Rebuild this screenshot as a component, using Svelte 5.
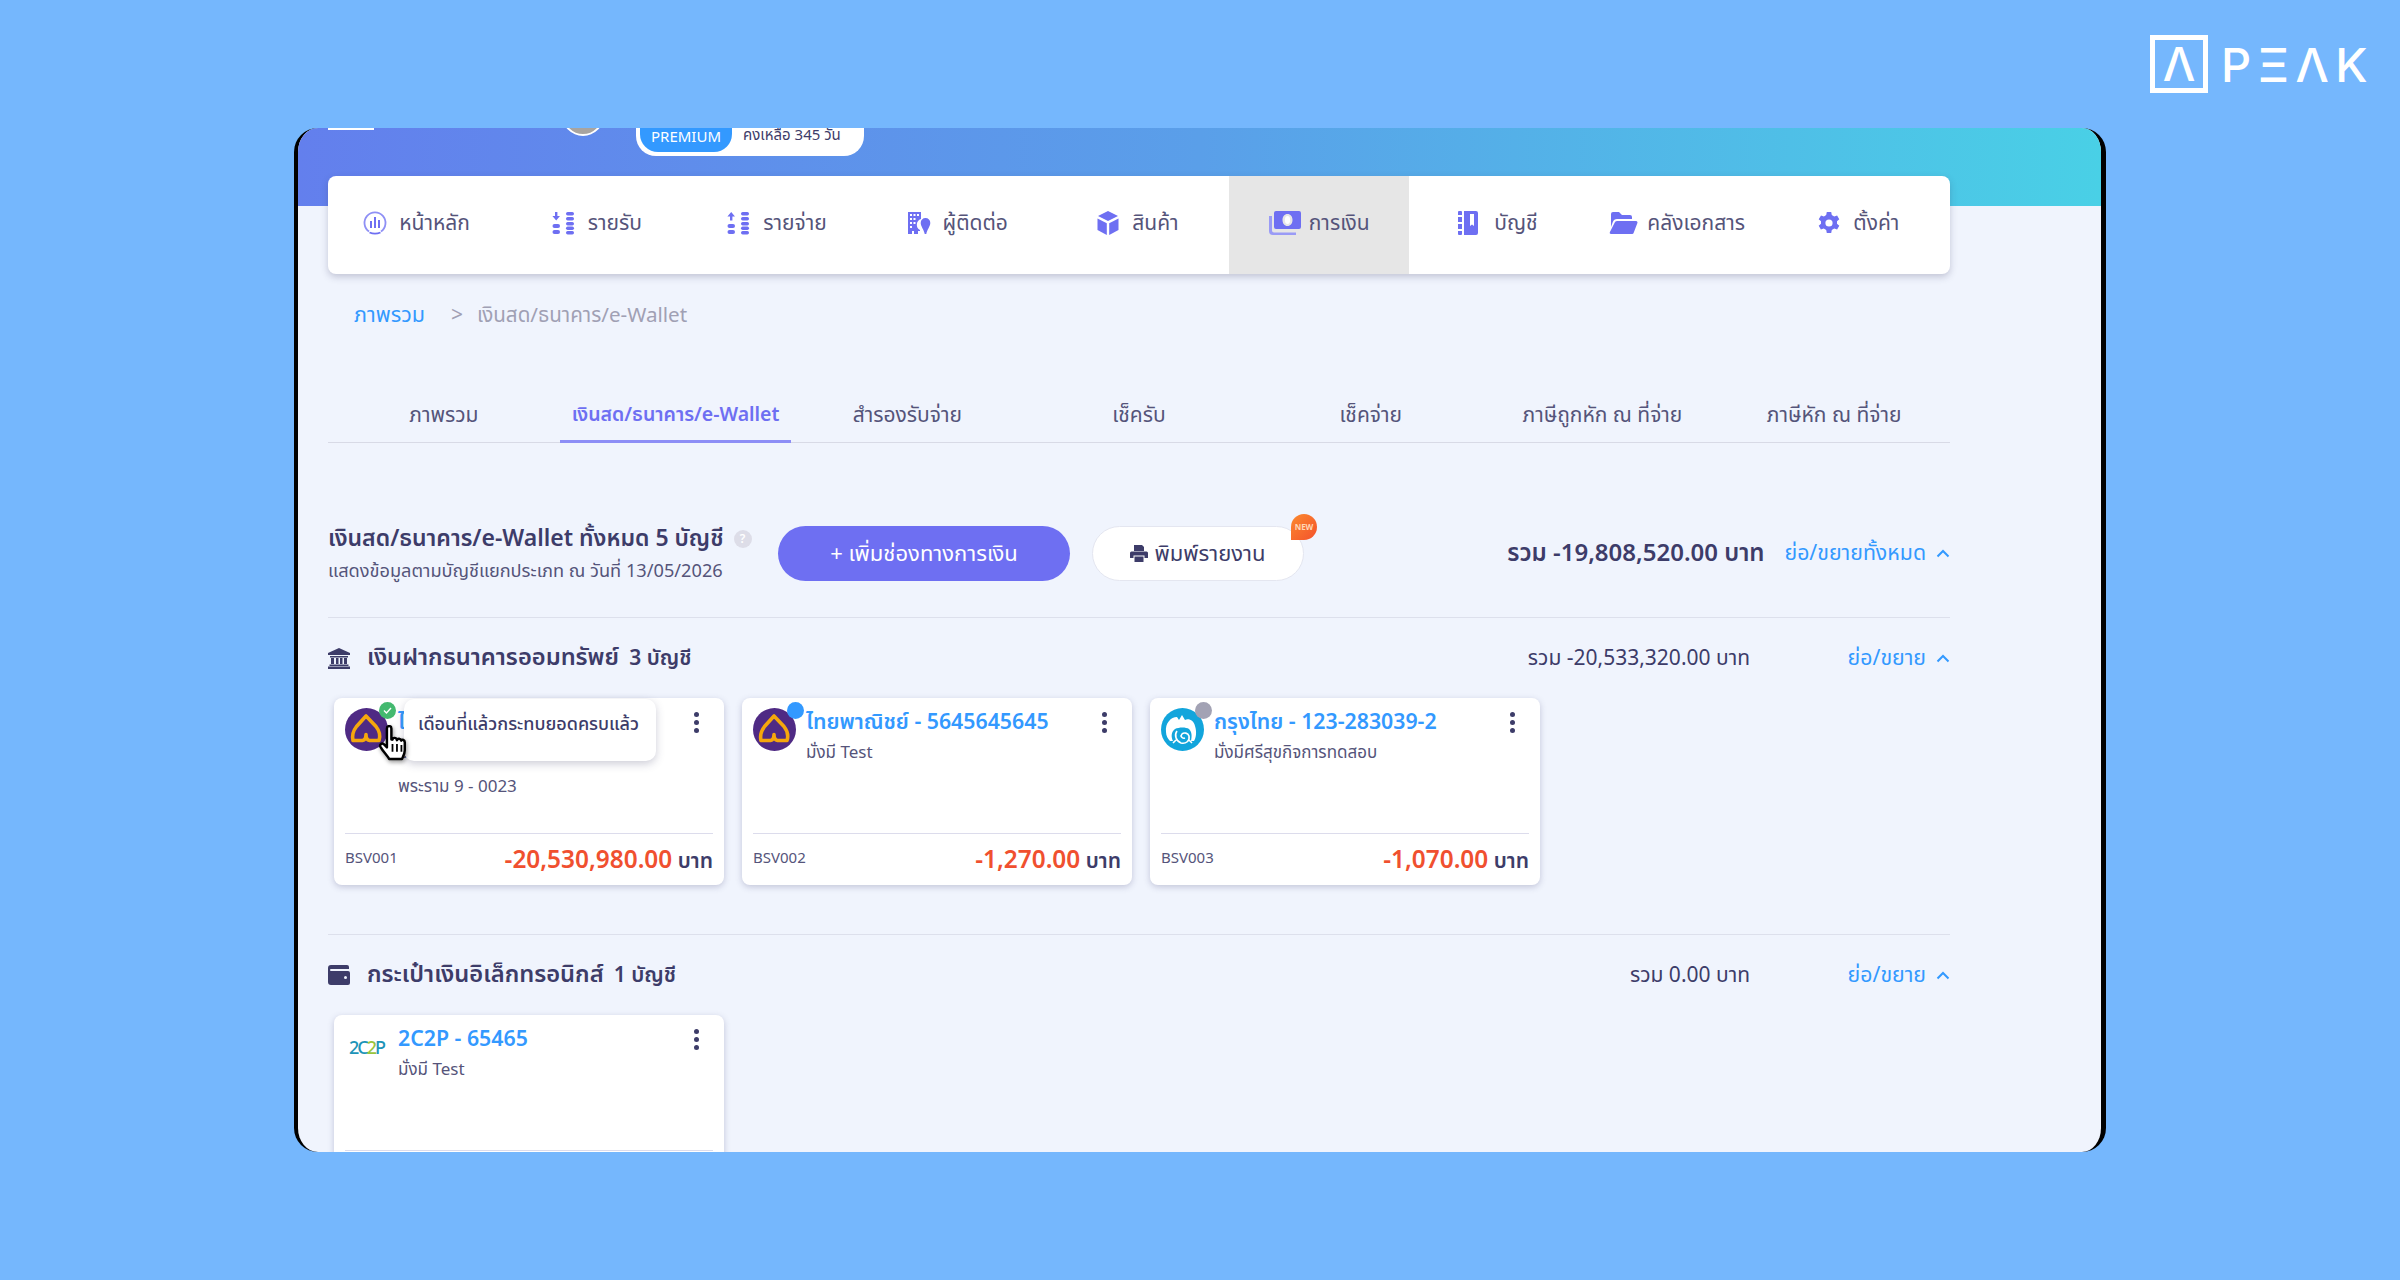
<script>
  const navItems = [
    { label: 'หน้าหลัก', icon: 'home' },
    { label: 'รายรับ', icon: 'in' },
    { label: 'รายจ่าย', icon: 'out' },
    { label: 'ผู้ติดต่อ', icon: 'contact' },
    { label: 'สินค้า', icon: 'box' },
    { label: 'การเงิน', icon: 'money', active: true },
    { label: 'บัญชี', icon: 'book' },
    { label: 'คลังเอกสาร', icon: 'folder' },
    { label: 'ตั้งค่า', icon: 'gear' }
  ];

  const tabs = ['ภาพรวม', 'เงินสด/ธนาคาร/e-Wallet', 'สำรองรับจ่าย', 'เช็ครับ', 'เช็คจ่าย', 'ภาษีถูกหัก ณ ที่จ่าย', 'ภาษีหัก ณ ที่จ่าย'];

  const bankCards = [
    { title: 'ไทยพาณิชย์ - 1234567890', sub: 'มั่งมี Test', branch: 'พระราม 9 - 0023', code: 'BSV001', amount: '-20,530,980.00', logo: 'scb', status: 'ok' },
    { title: 'ไทยพาณิชย์ - 5645645645', sub: 'มั่งมี Test', code: 'BSV002', amount: '-1,270.00', logo: 'scb', status: 'blue' },
    { title: 'กรุงไทย - 123-283039-2', sub: 'มั่งมีศรีสุขกิจการทดสอบ', code: 'BSV003', amount: '-1,070.00', logo: 'ktb', status: 'grey' }
  ];

  const walletCards = [
    { title: '2C2P - 65465', sub: 'มั่งมี Test', code: 'EWL001', amount: '0.00', logo: '2c2p' }
  ];
</script>

{#snippet chevron()}
  <svg class="chev" viewBox="0 0 14 9" width="14" height="9"><path d="M1.5 7.5 7 2l5.5 5.5" fill="none" stroke="#3399ff" stroke-width="2"/></svg>
{/snippet}

{#snippet navIcon(name)}
  <svg class="nav-icon" viewBox="0 0 32 24" width="32" height="24" fill="#6e6ff2">
    {#if name === 'home'}
      <path d="M10 20.5a10.5 10.5 0 1 1 12 0" fill="none" stroke="#8f90f5" stroke-width="1.8"/>
      <path d="M10.5 21.5q5.500 2.200 11 0" fill="none" stroke="#6e6ff2" stroke-width="1.800"/>
      <rect x="11" y="10" width="2" height="7"/><rect x="15" y="6" width="2" height="11"/><rect x="19" y="9" width="2" height="8"/>
    {:else if name === 'in' || name === 'out'}
      {#if name === 'in'}
        <path d="M7 1h2.400v4h2.600L8.200 9.500 4.400 5H7z"/>
      {:else}
        <path d="M7 9.500h2.400v-4h2.600L8.200 1 4.400 5.500H7z"/>
      {/if}
      <rect x="4.500" y="13" width="7.500" height="4" rx="2"/><rect x="4.500" y="19" width="7.500" height="4" rx="2"/>
      <rect x="18" y="1" width="8" height="3.500" rx="1.700"/><rect x="18" y="6" width="8" height="3.500" rx="1.700"/><rect x="18" y="11" width="8" height="3.500" rx="1.700"/><rect x="18" y="15.500" width="8" height="3.500" rx="1.700"/><rect x="18" y="20" width="8" height="3.500" rx="1.700"/>
    {:else if name === 'contact'}
      <path d="M5 1h13v7a6 6 0 0 0-1 11v1h-2v3h-4v-3H9v3H5z"/>
      <g fill="#fff"><rect x="7" y="3" width="2" height="2"/><rect x="10.500" y="3" width="2" height="2"/><rect x="14" y="3" width="2" height="2"/><rect x="7" y="7" width="2" height="2"/><rect x="10.500" y="7" width="2" height="2"/><rect x="7" y="11" width="2" height="2"/><rect x="10.500" y="11" width="2" height="2"/><rect x="7" y="15" width="2" height="2"/></g>
      <path d="M22.500 7a4.800 4.800 0 0 1 4.800 5c0 3.500-3.300 6.500-4 11h-1.600c-.7-4.500-4-7.500-4-11a4.800 4.800 0 0 1 4.800-5z"/>
    {:else if name === 'box'}
      <path d="M16 0l10 5-10 5L6 5z"/><path d="M5.500 7.500l9.300 4.700V24l-9.300-5z"/><path d="M26.500 7.500l-9.300 4.700V24l9.300-5z"/>
    {:else if name === 'money'}
      <path d="M0 5h3v14.500a2 2 0 0 0 2 2h22v2.500H4a4 4 0 0 1-4-4z" fill="#9a9bf6"/>
      <path fill-rule="evenodd" d="M7 0h23a2 2 0 0 1 2 2v14a2 2 0 0 1-2 2H7a2 2 0 0 1-2-2V2a2 2 0 0 1 2-2zm11.500 3c-3 0-5 2.600-5 6s2 6 5 6 5-2.600 5-6-2-6-5-6z"/>
      <ellipse cx="18.500" cy="9" rx="2.600" ry="4" fill="#fff"/>
    {:else if name === 'book'}
      <path fill-rule="evenodd" d="M10 0h12a2 2 0 0 1 2 2v20a2 2 0 0 1-2 2H10zm6 3v12l2-1.500 2 1.500V3z"/>
      <rect x="4" y="0" width="4" height="24" rx="1"/>
      <g fill="#fff"><rect x="4" y="4" width="4" height="2"/><rect x="4" y="11" width="4" height="2"/><rect x="4" y="18" width="4" height="2"/></g>
    {:else if name === 'folder'}
      <path d="M4 3a2 2 0 0 1 2-2h6l3 3h8a2 2 0 0 1 2 2v2H10c-2 0-3.500 1-4.200 3L4 16z" fill="#6e6ff2"/>
      <path d="M10 10h19c1.200 0 1.800 1 1.400 2l-3.800 10c-.3.700-1 1-1.600 1H4c-1 0-1.500-.8-1.200-1.700L7.500 12c.5-1.200 1.300-2 2.500-2z"/>
    {:else}
      <path fill-rule="evenodd" d="M13.800 1h4.400l.6 3 2.400 1.400 2.900-1 2.200 3.800-2.300 2v2.600l2.300 2-2.200 3.800-2.900-1-2.400 1.400-.6 3h-4.400l-.6-3-2.400-1.400-2.900 1-2.200-3.800 2.300-2v-2.600l-2.300-2L8 4.400l2.900 1L13.200 4zM16 8.400a3.600 3.600 0 1 0 0 7.200 3.600 3.600 0 0 0 0-7.200z"/>
    {/if}
  </svg>
{/snippet}

{#snippet bankLogo(kind)}
  {#if kind === 'scb'}
    <svg viewBox="0 0 43 43" width="43" height="43">
      <circle cx="21.500" cy="21.500" r="21.500" fill="#4f2a84"/>
      <path d="M21 8 11.500 18.500C8 23 7 28 8 32.500h9.500q3.500-.5 3.500-6 0 5.500 3.500 6H34c1.500-4.500.5-9.500-3-14z" fill="none" stroke="#f5a70c" stroke-width="3.600" stroke-linejoin="round"/>
    </svg>
  {:else if kind === 'ktb'}
    <svg viewBox="0 0 43 43" width="43" height="43">
      <circle cx="21.500" cy="21.500" r="21.500" fill="#12a5dc"/>
      <path d="M5 24C4 15 10 9 16 9l2 3 3-5 3 5c4-2 9 1 10 6 2 6 1 12-1 15h-3c1-5 1-9-2-12-3-2-10-2-14 0-4 3-4 8-2 12H9c-2-2-4-5-4-9z" fill="#fff"/>
      <path d="M16 23c-3 4-1 10 4 12 5 1 9-2 8-7-1-3-5-4-7-2-2 2 0 5 3 4M12 35l3-3M31 35l-3-3" fill="none" stroke="#fff" stroke-width="1.600"/>
    </svg>
  {:else}
    <span class="logo-2c2p"><span class="c1">2C</span><span class="c2">2</span><span class="c1">P</span></span>
  {/if}
{/snippet}

{#snippet accountCard(card)}
  <article class="card">
    <div class="card-body">
      <div class="logo-wrap">
        {@render bankLogo(card.logo)}
        {#if card.status}
          <span class="status {card.status}">
            {#if card.status === 'ok'}
              <svg viewBox="0 0 10 8" width="9" height="7"><path d="M1 4l2.800 2.800L9 1.200" fill="none" stroke="#fff" stroke-width="1.600"/></svg>
            {/if}
          </span>
        {/if}
      </div>
      <div class="card-text">
        <div class="card-title">{card.title}</div>
        <div class="card-sub">{card.sub}</div>
        {#if card.branch}<div class="card-sub branch">{card.branch}</div>{/if}
      </div>
      <span class="kebab"><i></i><i></i><i></i></span>
    </div>
    <footer class="card-foot">
      <span class="code">{card.code}</span>
      <span class="amount"><b>{card.amount}</b> <span>บาท</span></span>
    </footer>
  </article>
{/snippet}

<div class="page">
  <div class="brand" aria-label="PEAK">
    <span class="brand-box"><span>Λ</span></span>
    <span class="brand-word">PΞΛK</span>
  </div>

  <main class="frame">
    <header class="hero">
      <span class="hero-line"></span>
      <span class="avatar"></span>
      <div class="plan"><span class="plan-tag">PREMIUM</span><span class="plan-days">คงเหลือ 345 วัน</span></div>
    </header>

    <div class="content">
      <nav class="nav">
        {#each navItems as item}
          <a class="nav-item" class:active={item.active}>
            {@render navIcon(item.icon)}
            <span>{item.label}</span>
          </a>
        {/each}
      </nav>

      <div class="crumbs">
        <span class="crumb-link">ภาพรวม</span>
        <span class="crumb-sep">&gt;</span>
        <span>เงินสด/ธนาคาร/e-Wallet</span>
      </div>

      <div class="tabs">
        {#each tabs as tab, i}
          <div class="tab" class:on={i === 1}>{tab}</div>
        {/each}
      </div>

      <section class="summary">
        <div class="summary-title">
          <h1>เงินสด/ธนาคาร/e-Wallet ทั้งหมด 5 บัญชี <span class="help">?</span></h1>
          <p>แสดงข้อมูลตามบัญชีแยกประเภท ณ วันที่ 13/05/2026</p>
        </div>
        <button class="btn-add">+ เพิ่มช่องทางการเงิน</button>
        <button class="btn-print">
          <svg viewBox="0 0 18 17" width="18" height="17" fill="#3d3c69"><path d="M4 0h8l2 2v4H4zM1.500 6.500h15A1.500 1.500 0 0 1 18 8v5h-3.500v-2.500h-11V13H0V8a1.500 1.500 0 0 1 1.500-1.500z"/><rect x="4.500" y="11.500" width="9" height="5.500"/></svg>
          พิมพ์รายงาน
          <span class="new">NEW</span>
        </button>
        <div class="total-wrap">
          <strong>รวม -19,808,520.00 บาท</strong>
          <span class="toggle">ย่อ/ขยายทั้งหมด {@render chevron()}</span>
        </div>
      </section>

      <section class="group">
        <div class="group-head">
          <svg viewBox="0 0 22 21" width="22" height="21" fill="#3d3c69"><path d="M11 0l11 5v2H0V5z"/><rect x="2" y="8" width="18" height="1.500"/><rect x="3" y="10" width="3" height="6"/><rect x="8" y="10" width="2.500" height="6"/><rect x="12" y="10" width="2.500" height="6"/><rect x="16" y="10" width="3" height="6"/><rect x="1.500" y="16.500" width="19" height="1.500"/><rect x="0" y="18.500" width="22" height="2.500"/></svg>
          <h2>เงินฝากธนาคารออมทรัพย์ <small>3 บัญชี</small></h2>
          <span class="group-total">รวม -20,533,320.00 บาท</span>
          <span class="toggle narrow">ย่อ/ขยาย {@render chevron()}</span>
        </div>
        <div class="cards">
          {#each bankCards as card}
            {@render accountCard(card)}
          {/each}
          <div class="tip">เดือนที่แล้วกระทบยอดครบแล้ว</div>
          <svg class="hand" viewBox="0 0 26 34" width="29" height="38">
            <path d="M8 3c0-2.700 4-2.700 4 0v10l1 .1c0-2 3.400-2.200 3.800 0l.2.500c.5-2 3.500-1.700 3.800.4.800-1.300 3.200-.8 3.200 1.500v7c0 3.500-1.500 5.500-2.500 8H10c-1-2.500-5-6-7.800-11-1-2 1.200-3.800 3-2.300L8 20z" fill="#fff" stroke="#000" stroke-width="2.200" stroke-linejoin="round"/>
            <path d="M13 17v7M17 17v7M21 18v6" stroke="#000" stroke-width="1.600"/>
          </svg>
        </div>
      </section>

      <section class="group second">
        <div class="group-head">
          <svg viewBox="0 0 22 20" width="22" height="20"><path d="M3 0h16a2 2 0 0 1 2 2v2H3a1 1 0 0 0 0 2h17a2 2 0 0 1 2 2v10a2 2 0 0 1-2 2H3a3 3 0 0 1-3-3V3a3 3 0 0 1 3-3z" fill="#3d3c69"/><circle cx="17.500" cy="12.500" r="1.500" fill="#f0f4fd"/></svg>
          <h2>กระเป๋าเงินอิเล็กทรอนิกส์ <small>1 บัญชี</small></h2>
          <span class="group-total">รวม 0.00 บาท</span>
          <span class="toggle narrow">ย่อ/ขยาย {@render chevron()}</span>
        </div>
        <div class="cards">
          {#each walletCards as card}
            {@render accountCard(card)}
          {/each}
        </div>
      </section>
    </div>
  </main>
</div>

<style>
  :global(body) {
    margin: 0;
    background: #75b7fd;
    font-family: 'Noto Sans', 'Noto Sans Thai', 'Noto Sans CJK SC', 'DejaVu Sans', sans-serif;
    color: #3d3c69;
  }

  .page {
    position: relative;
    width: 2400px;
    height: 1280px;
    padding-top: 128px;
    box-sizing: border-box;
  }

  .brand {
    position: absolute;
    top: 35px;
    left: 2150px;
    display: flex;
    align-items: center;
    gap: 13px;
    color: #fff;
  }

  .brand-box {
    width: 58px;
    height: 58px;
    box-sizing: border-box;
    border: 5px solid #fff;
    display: flex;
    align-items: center;
    justify-content: center;
    font: 500 46px/1 'Inter', sans-serif;
  }

  .brand-word {
    font: 500 47px/1 'Inter', sans-serif;
    letter-spacing: 6.500px;
  }

  .frame {
    position: relative;
    width: 1812px;
    height: 1024px;
    margin-left: 294px;
    box-sizing: border-box;
    border-left: 4px solid #000;
    border-right: 5px solid #000;
    border-radius: 24px;
    overflow: hidden;
    background: #f0f4fd;
  }

  .hero {
    height: 78px;
    background: linear-gradient(92deg, #637fed 0%, #5a9fe9 50%, #49d0e6 100%);
    position: relative;
  }

  .hero-line {
    position: absolute;
    left: 30px;
    top: 0;
    width: 46px;
    height: 2px;
    background: #fff;
  }

  .avatar {
    position: absolute;
    left: 264px;
    top: -34px;
    width: 42px;
    height: 42px;
    box-sizing: border-box;
    border-radius: 50%;
    background: #a8a4a0;
    border: 2px solid #fff;
  }

  .plan {
    position: absolute;
    left: 338px;
    top: -14px;
    display: flex;
    align-items: center;
    width: 228px;
    height: 42px;
    box-sizing: border-box;
    padding: 4px;
    background: #fff;
    border-radius: 0 0 20px 20px;
    font-size: 15px;
  }

  .plan-tag {
    background: #3399ff;
    color: #fff;
    border-radius: 0 0 18px 18px;
    width: 92px;
    height: 34px;
    display: flex;
    align-items: center;
    justify-content: center;
    padding-top: 1px;
    box-sizing: border-box;
  }

  .plan-days {
    margin-left: 11px;
    padding-top: 1px;
    color: #3d3c69;
  }

  .content {
    width: 1622px;
    margin: -30px 0 0 30px;
    position: relative;
  }

  .nav {
    display: grid;
    grid-template-columns: repeat(9, 1fr);
    height: 98px;
    background: #fff;
    border-radius: 8px;
    box-shadow: 0 3px 7px rgba(60, 60, 100, 0.25);
    overflow: hidden;
  }

  .nav-item {
    display: flex;
    align-items: center;
    justify-content: center;
    gap: 8px;
    font-size: 21px;
    color: #55547a;
    padding: 0 7px 4px 0;
  }

  .nav-item.active {
    background: #e6e6e6;
    padding-right: 0;
  }

  .crumbs {
    display: flex;
    gap: 26px;
    margin: 24px 0 0 26px;
    font-size: 20.600px;
    line-height: 32px;
    color: #a0a0b4;
  }

  .crumb-link {
    color: #3399ff;
    font-size: 21.500px;
  }

  .crumb-sep {
    font-size: 21px;
    margin-right: -12px;
  }

  .tabs {
    display: grid;
    grid-template-columns: repeat(7, 1fr);
    margin-top: 59px;
    border-bottom: 1px solid #d8dae6;
  }

  .tab {
    height: 53px;
    line-height: 50px;
    text-align: center;
    font-size: 21px;
    color: #55547a;
    box-sizing: border-box;
  }

  .tab.on {
    color: #6e6ff2;
    font-weight: 600;
    font-size: 19.500px;
    border-bottom: 3px solid #8d8ef6;
    margin-bottom: -1px;
    height: 54px;
  }

  .summary {
    display: flex;
    align-items: center;
    height: 175px;
    box-sizing: border-box;
    padding-top: 47px;
    border-bottom: 1px solid #dde0ec;
  }

  .summary-title {
    width: 450px;
    margin-top: -4px;
  }

  .summary-title h1 {
    margin: 0;
    font-size: 23px;
    font-weight: 600;
    line-height: 36px;
    white-space: nowrap;
  }

  .summary-title p {
    margin: 0;
    font-size: 18.200px;
    line-height: 30px;
    color: #55547a;
    white-space: nowrap;
  }

  .help {
    display: inline-flex;
    width: 18px;
    height: 18px;
    border-radius: 50%;
    background: #dddde8;
    color: #fff;
    font-size: 12px;
    align-items: center;
    justify-content: center;
    vertical-align: 3px;
    margin-left: 4px;
  }

  button {
    font-family: inherit;
    height: 55px;
    border-radius: 28px;
    cursor: pointer;
  }

  .btn-add {
    width: 292px;
    background: #6e6ff2;
    color: #fff;
    border: 0;
    font-size: 22px;
    margin-right: 22px;
  }

  .btn-print {
    position: relative;
    width: 212px;
    display: flex;
    align-items: center;
    justify-content: center;
    gap: 6px;
    background: #fff;
    border: 1px solid #e4e6f0;
    color: #3d3c69;
    font-size: 22px;
  }

  .new {
    position: absolute;
    right: -14px;
    top: -13px;
    width: 26px;
    height: 26px;
    border-radius: 13px 13px 13px 0;
    background: linear-gradient(135deg, #fb8a2e, #f4512c);
    color: #ffd7b5;
    font-size: 8px;
    line-height: 26px;
    font-weight: 700;
  }

  .total-wrap {
    margin-left: auto;
    display: flex;
    align-items: center;
    gap: 20px;
  }

  .total-wrap strong {
    font-size: 24px;
    font-weight: 600;
  }

  .toggle {
    display: inline-flex;
    align-items: center;
    gap: 10px;
    font-size: 21.300px;
    color: #3399ff;
    white-space: nowrap;
  }

  .group-head {
    display: flex;
    align-items: center;
    height: 82px;
    box-sizing: border-box;
    padding-bottom: 2px;
  }

  .group-head h2 {
    margin: 0 0 0 17px;
    font-size: 23.700px;
    font-weight: 600;
  }

  .group-head h2 small {
    font-size: 21px;
    margin-left: 4px;
  }

  .group-total {
    margin-left: auto;
    font-size: 21px;
  }

  .narrow {
    width: 106px;
    margin-left: 94px;
    justify-content: flex-end;
  }

  .cards {
    position: relative;
    display: flex;
    gap: 18px;
    margin: -2px 0 0 6px;
  }

  .card {
    width: 390px;
    height: 187px;
    flex: none;
    display: flex;
    flex-direction: column;
    box-sizing: border-box;
    padding: 0 11px;
    background: #fff;
    border-radius: 8px;
    box-shadow: 0 2px 6px rgba(60, 60, 110, 0.25);
  }

  .card-body {
    flex: 1;
    display: flex;
    padding-top: 10px;
    position: relative;
  }

  .logo-wrap {
    position: relative;
    width: 43px;
    height: 43px;
    flex: none;
    display: flex;
    align-items: center;
    justify-content: center;
  }

  .status {
    position: absolute;
    right: -8px;
    top: -6px;
    width: 17px;
    height: 17px;
    border-radius: 50%;
    display: flex;
    align-items: center;
    justify-content: center;
  }

  .status.ok { background: #43b96f; }
  .status.blue { background: #3399ff; }
  .status.grey { background: #a2a2b4; }

  .logo-2c2p {
    font-size: 18px;
    font-weight: 500;
    letter-spacing: -2px;
  }

  .c1 { color: #1d94b8; }
  .c2 { color: #9ac43c; }

  .card-text {
    margin-left: 10px;
    min-width: 0;
    margin-top: -1px;
  }

  .card-title {
    color: #3399ff;
    font-size: 21.300px;
    font-weight: 600;
    line-height: 28px;
    white-space: nowrap;
  }

  .card-sub {
    font-size: 17px;
    line-height: 28px;
    color: #55547a;
    margin-top: 3px;
  }

  .branch {
    margin-top: 6px;
  }

  .kebab {
    position: absolute;
    right: 14px;
    top: 14px;
    display: flex;
    flex-direction: column;
    gap: 3px;
  }

  .kebab i {
    width: 5px;
    height: 5px;
    border-radius: 50%;
    background: #3d3c69;
  }

  .card-foot {
    height: 51px;
    display: flex;
    align-items: center;
    justify-content: space-between;
    border-top: 1px solid #dcdcec;
  }

  .code {
    font-size: 15px;
    color: #55547a;
    margin-top: -6px;
  }

  .amount {
    font-size: 21px;
    font-weight: 600;
  }

  .amount b {
    font-size: 24.400px;
    font-weight: 600;
    color: #f0502f;
  }

  .tip {
    position: absolute;
    left: 70px;
    top: 1px;
    width: 252px;
    height: 62px;
    box-sizing: border-box;
    padding: 12px 14px;
    background: #fff;
    border-radius: 10px;
    box-shadow: 0 3px 8px rgba(60, 60, 100, 0.25);
    font-size: 18px;
    font-weight: 500;
    white-space: nowrap;
  }

  .hand {
    position: absolute;
    left: 44px;
    top: 27px;
    filter: drop-shadow(1px 2px 2px rgba(0, 0, 0, 0.4));
  }

  .second {
    margin-top: 49px;
    border-top: 1px solid #dde0ec;
  }
</style>
